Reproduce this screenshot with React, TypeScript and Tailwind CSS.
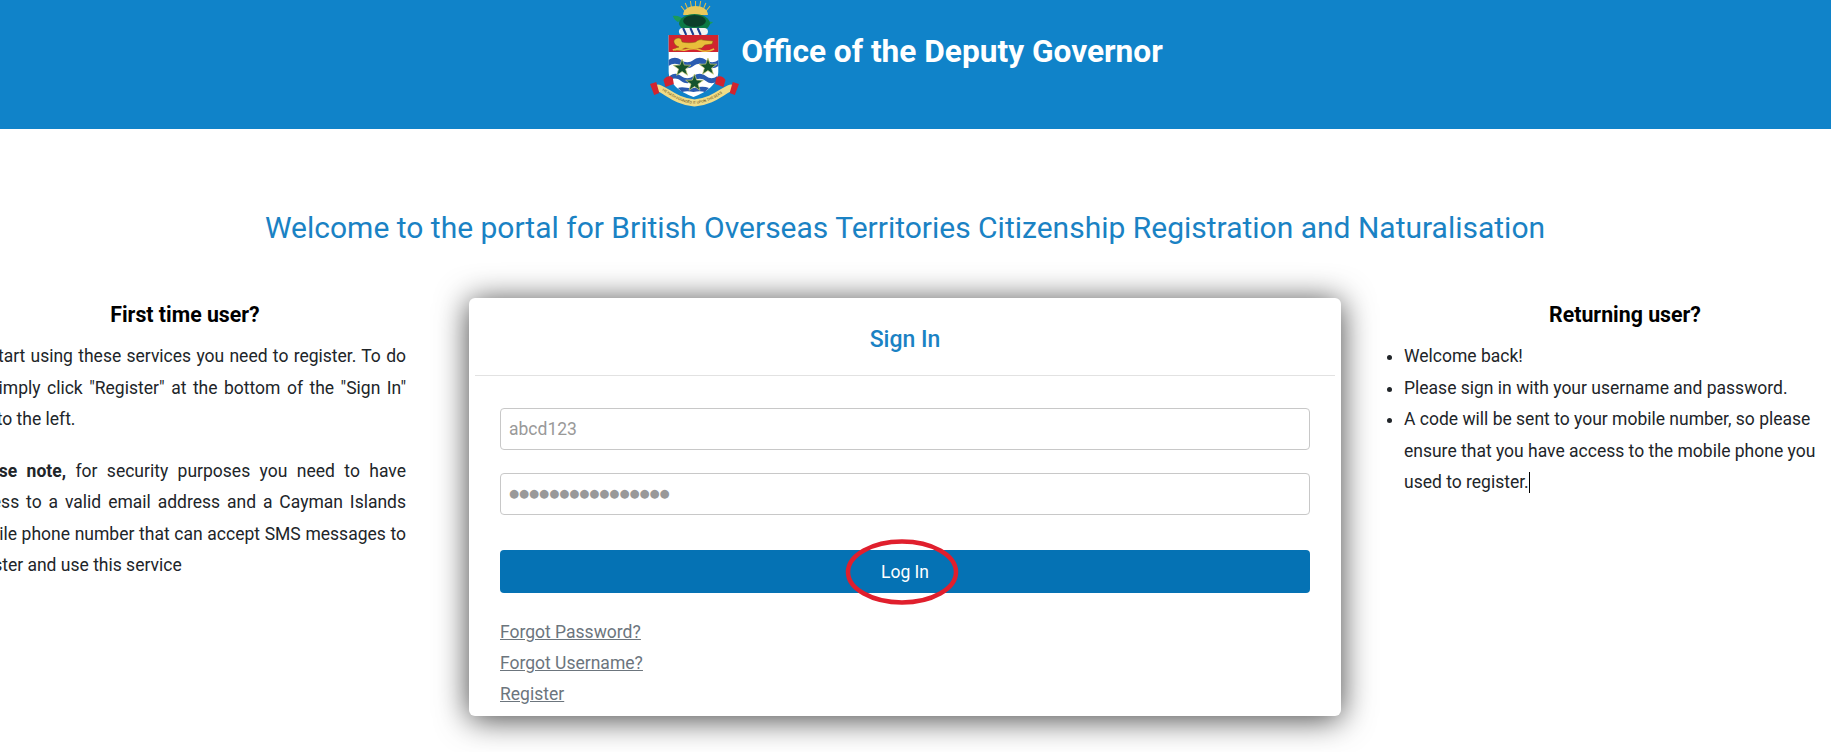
import React from 'react';

const Star = ({ cx, cy, r }: { cx: number; cy: number; r: number }) => {
    const pts: string[] = [];
    for (let i = 0; i < 10; i++) {
        const rad = i % 2 === 0 ? r : r * 0.4;
        const a = (Math.PI / 5) * i - Math.PI / 2;
        pts.push(`${cx + rad * Math.cos(a)},${cy + rad * Math.sin(a)}`);
    }
    return <polygon points={pts.join(' ')} fill="#14532d" stroke="#cfd07a" strokeWidth="0.7" />;
};

const Crest = () => (
    <svg viewBox="0 0 88 107" preserveAspectRatio="none" className="w-[91px] h-[107px] shrink-0" aria-label="Coat of arms of the Cayman Islands">
        {/* sun crest */}
        <g stroke="#e2bd45" strokeWidth="1">
            <path d="M45 1v12M40 1l2 12M50 1l-2 12M35 3l4 10M55 3l-4 10M31 6l6 8M59 6l-6 8" />
        </g>
        <path d="M33 15c0-6 6-9 12-9s12 3 12 9z" fill="#e8c95c" />
        {/* turtle */}
        <path d="M23 16c4-1 8 1 10 3l-5 3c-2-1-4-3-5-6zM62 22c-2 2-5 4-8 4l1-5z" fill="#1b9a5a" />
        <path d="M29 24c0-6 7-10 15-10s15 4 15 10c-2 6-8 8-15 8s-13-2-15-8z" fill="#0c7a45" />
        <ellipse cx="44" cy="21" rx="11" ry="6" fill="#0b3f2b" />
        {/* wreath */}
        <rect x="29" y="28" width="28" height="7" rx="3.5" fill="#f4f4f4" />
        <path d="M33 28l3 7M40 28l3 7M47 28l3 7" stroke="#1c3f8f" strokeWidth="2" />
        {/* shield */}
        <path d="M19 35h48v36c0 13-11 21-24 26-13-5-24-13-24-26z" fill="#fff" />
        <path d="M19 35h48v17H19z" fill="#d1242f" />
        {/* lions on the chief */}
        <path d="M24 41c1-3 5-4 7-2l1 3c4 1 9 1 13 0 2-2 5-3 7-2l10 1-1 3-7 1-3 3c-6 1-11 1-16 0l-4 2-7 1 2-3 3-1c-3-1-5-3-5-6z" fill="#e8bf3a" stroke="#7a5a10" strokeWidth="0.5" />
        <path d="M23 50c5-2 8 1 12 0s10-2 14 0 10 1 14-1" fill="none" stroke="#e8bf3a" strokeWidth="1.5" />
        {/* waves */}
        <path d="M19 60c4-3 8-3 12 0s8 3 12 0 8-3 12 0 8 3 12 0v6c-4 3-8 3-12 0s-8-3-12 0-8 3-12 0-8-3-12 0z" fill="#2a5bb0" />
        <path d="M20 76c4-3 7-3 11 0s8 3 12 0 8-3 12 0 7 3 11 0v5c-4 3-7 3-11 0s-8-3-12 0-8 3-12 0-7-3-10-1z" fill="#2a5bb0" />
        <path d="M28 88c5-2 10 1 15 0s10-2 15 0l-4 4c-3-1-7-1-11 0-4-1-8-1-11 0z" fill="#2a5bb0" />
        <Star cx={32} cy={68} r={9} />
        <Star cx={57} cy={67} r={9} />
        <Star cx={44} cy={83} r={9} />
        {/* motto scroll */}
        <path d="M9 88c9 3 16 13 35 15 19-2 26-12 35-15" fill="none" stroke="#f0dc87" strokeWidth="7" strokeLinecap="round" />
        <path d="M1 84l4 11 5-2-3-11zM87 84l-4 11-5-2 3-11z" fill="#d1242f" />
        <path d="M14 80c2-4 7-5 9-2l1 6-8 3zM74 80c-2-4-7-5-9-2l-1 6 8 3z" fill="#d1242f" />
        <path id="motto-line" d="M9 89c9 3 16 13 35 15 19-2 26-12 35-15" fill="none" />
        <text fontSize="3.6" fontFamily="Roboto, sans-serif" fill="#5b4a14">
            <textPath href="#motto-line" startOffset="5%">HE HATH FOUNDED IT UPON THE SEAS</textPath>
        </text>
    </svg>
);

const App = () => {
    return (
        <div className="h-[752px] overflow-hidden bg-white font-['Roboto',sans-serif] text-[17.5px] text-[#212529]">
            <header className="h-[129px] bg-[#1083c9] flex justify-center">
                <div className="flex items-start gap-[1px] ml-[-19px]">
                    <Crest />
                    <h2 className="mt-[32px] text-[31.65px] leading-[40px] font-bold text-white">Office of the Deputy Governor</h2>
                </div>
            </header>

            <h1 className="mt-[79px] pr-[21px] text-center text-[30px] leading-[40px] text-[#1a82c4]">
                Welcome to the portal for British Overseas Territories Citizenship Registration and Naturalisation
            </h1>

            <div className="flex mt-[50px] ml-[-36px] w-[1900px]">
                <section className="w-[442px] shrink-0">
                    <h3 className="text-[21.3px] leading-[33px] font-bold text-center text-black">First time user?</h3>
                    <p className="mt-[10px] leading-[31.5px] text-justify">
                        To start using these services you need to register. To do so simply click "Register" at the bottom of the "Sign In" box to the left.
                    </p>
                    <p className="mt-[20px] leading-[31.5px] text-justify">
                        <b>Please note,</b> for security purposes you need to have access to a valid email address and a Cayman Islands mobile phone number that can accept SMS messages to register and use this service
                    </p>
                </section>

                <main className="relative w-[872px] h-[418px] shrink-0 ml-[63px] mr-[58px] bg-white rounded-[6px] shadow-[0_3px_32px_rgba(0,0,0,0.75)]">
                    <div className="mx-[6px] h-[78px] pt-[8px] border-b border-[#e2e2e2] flex items-center justify-center">
                        <h4 className="text-[23px] font-medium text-[#1a82c4]">Sign In</h4>
                    </div>
                    <div className="px-[31px] pt-[32px]">
                        <input
                            readOnly
                            value="abcd123"
                            className="block w-full h-[42px] px-2 rounded-[4px] border border-[#c8c8c8] text-[17.5px] text-[#999] outline-none"
                        />
                        <input
                            readOnly
                            value="●●●●●●●●●●●●●●●●"
                            className="block w-full h-[42px] mt-[23px] px-2 pb-[2px] rounded-[4px] border border-[#c8c8c8] font-['DejaVu_Sans',sans-serif] text-[11.5px] text-[#999] outline-none"
                        />
                        <button className="relative block w-full h-[43px] mt-[35px] pt-[2px] rounded-[4px] bg-[#0572b4] text-[17.5px] text-white">
                            Log In
                            <svg viewBox="0 0 114 68" className="absolute left-[345px] top-[-12px] w-[114px] h-[68px]">
                                <ellipse cx="57" cy="34" rx="54" ry="30.5" fill="none" stroke="#e01f2d" strokeWidth="4.5" />
                            </svg>
                        </button>
                        <div className="mt-[24px] flex flex-col items-start leading-[31px] text-[#6c757d] underline">
                            <a href="#forgot-password">Forgot Password?</a>
                            <a href="#forgot-username">Forgot Username?</a>
                            <a href="#register">Register</a>
                        </div>
                    </div>
                </main>

                <section className="w-[452px] shrink-0">
                    <h3 className="text-[21.3px] leading-[33px] font-bold text-center text-black">Returning user?</h3>
                    <ul className="mt-[10px] pl-[5px] list-disc leading-[31.5px]">
                        <li>Welcome back!</li>
                        <li>Please sign in with your username and password.</li>
                        <li>
                            A code will be sent to your mobile number, so please ensure that you have access to the mobile phone you used to register.
                            <span className="inline-block w-px h-[21px] bg-black align-[-5px]" />
                        </li>
                    </ul>
                </section>
            </div>
        </div>
    );
};

export default App;
